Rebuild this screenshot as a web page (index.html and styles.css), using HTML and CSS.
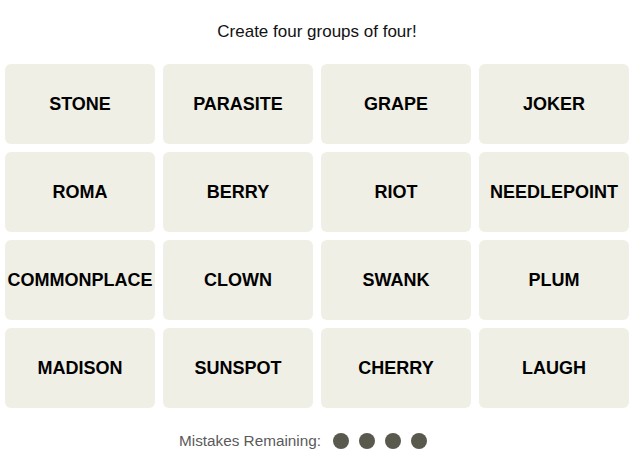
FILE: index.html
```html
<!DOCTYPE html>
<html>
<head>
<meta charset="utf-8">
<link rel="stylesheet" href="styles.css">
</head>
<body>
<div class="game">
  <p class="prompt">Create four groups of four!</p>
  <div class="board">
    <div class="tile">STONE</div>
    <div class="tile">PARASITE</div>
    <div class="tile">GRAPE</div>
    <div class="tile">JOKER</div>
    <div class="tile">ROMA</div>
    <div class="tile">BERRY</div>
    <div class="tile">RIOT</div>
    <div class="tile">NEEDLEPOINT</div>
    <div class="tile">COMMONPLACE</div>
    <div class="tile">CLOWN</div>
    <div class="tile">SWANK</div>
    <div class="tile">PLUM</div>
    <div class="tile">MADISON</div>
    <div class="tile">SUNSPOT</div>
    <div class="tile">CHERRY</div>
    <div class="tile">LAUGH</div>
  </div>
  <div class="mistakes">
    <span class="mistakes-label">Mistakes Remaining:</span>
    <span class="dots">
      <span class="dot"></span><span class="dot"></span><span class="dot"></span><span class="dot"></span>
    </span>
  </div>
</div>
</body>
</html>
```
FILE: styles.css
```css
html, body {
  margin: 0;
  padding: 0;
  background: #ffffff;
}
body {
  font-family: "Liberation Sans", Arial, sans-serif;
  color: #000;
}
.game {
  width: 624px;
  margin-left: 5px;
  display: flex;
  flex-direction: column;
  align-items: center;
}
.prompt {
  margin: 22px 0 0 0;
  height: 42px;
  font-size: 17px;
  line-height: 20px;
  color: #121212;
}
.board {
  display: grid;
  grid-template-columns: repeat(4, 150px);
  grid-auto-rows: 80px;
  gap: 8px;
}
.tile {
  background: #efefe6;
  border-radius: 6px;
  display: flex;
  align-items: center;
  justify-content: center;
  font-weight: 700;
  font-size: 18px;
  color: #000;
  white-space: nowrap;
}
.mistakes {
  margin-top: 24px;
  display: flex;
  align-items: center;
  gap: 12px;
  margin-right: 28px;
}
.mistakes-label {
  font-size: 15.3px;
  color: #5a5a5a;
}
.dots {
  display: flex;
  gap: 10px;
}
.dot {
  width: 16px;
  height: 16px;
  border-radius: 50%;
  background: #5a594e;
}
```
